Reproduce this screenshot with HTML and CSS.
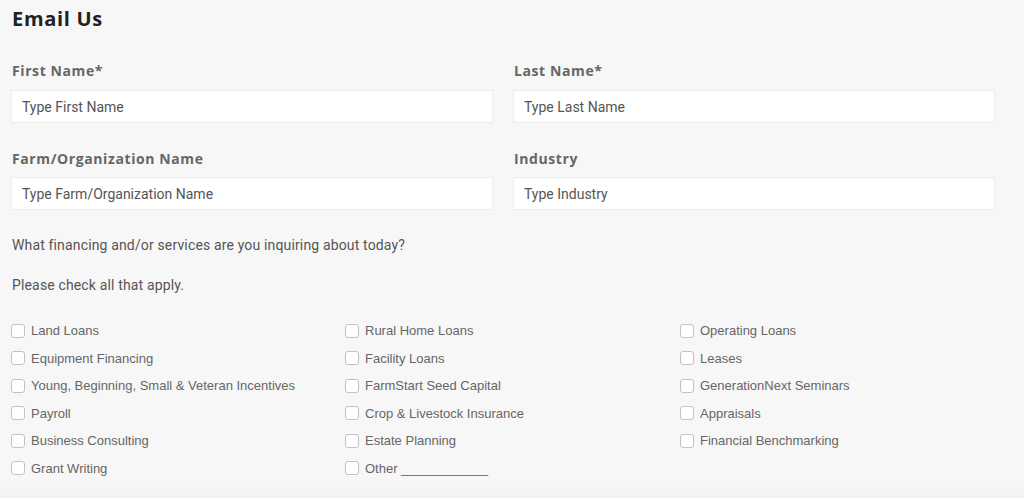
FILE: index.html
```html
<!DOCTYPE html>
<html lang="en">
<head>
    <meta charset="UTF-8">
    <meta name="viewport" content="width=device-width, initial-scale=1.0">
    <title>Email Us</title>
    <link rel="stylesheet" href="styles.css">
</head>
<body>
    <div class="container">
        <h1>Email Us</h1>
        <form id="emailForm">
            <div class="row">
                <div class="field">
                    <label for="firstName">First Name*</label>
                    <input type="text" id="firstName" placeholder="Type First Name">
                </div>
                <div class="field">
                    <label for="lastName">Last Name*</label>
                    <input type="text" id="lastName" placeholder="Type Last Name">
                </div>
            </div>
            <div class="row">
                <div class="field">
                    <label for="farmName">Farm/Organization Name</label>
                    <input type="text" id="farmName" placeholder="Type Farm/Organization Name">
                </div>
                <div class="field">
                    <label for="industry">Industry</label>
                    <input type="text" id="industry" placeholder="Type Industry">
                </div>
            </div>

            <p class="question">What financing and/or services are you inquiring about today?</p>
            <p class="question note">Please check all that apply.</p>

            <div class="checks">
                <label class="check"><input type="checkbox"> Land Loans</label>
                <label class="check"><input type="checkbox"> Rural Home Loans</label>
                <label class="check"><input type="checkbox"> Operating Loans</label>
                <label class="check"><input type="checkbox"> Equipment Financing</label>
                <label class="check"><input type="checkbox"> Facility Loans</label>
                <label class="check"><input type="checkbox"> Leases</label>
                <label class="check"><input type="checkbox"> Young, Beginning, Small &amp; Veteran Incentives</label>
                <label class="check"><input type="checkbox"> FarmStart Seed Capital</label>
                <label class="check"><input type="checkbox"> GenerationNext Seminars</label>
                <label class="check"><input type="checkbox"> Payroll</label>
                <label class="check"><input type="checkbox"> Crop &amp; Livestock Insurance</label>
                <label class="check"><input type="checkbox"> Appraisals</label>
                <label class="check"><input type="checkbox"> Business Consulting</label>
                <label class="check"><input type="checkbox"> Estate Planning</label>
                <label class="check"><input type="checkbox"> Financial Benchmarking</label>
                <label class="check"><input type="checkbox"> Grant Writing</label>
                <label class="check"><input type="checkbox"> Other ____________</label>
            </div>
        </form>
    </div>
</body>
</html>
```

FILE: styles.css
```css
body {
    margin: 0;
    padding: 0;
    background-color: #f3f3f3;
    font-family: Roboto, "Liberation Sans", sans-serif;
}
.container {
    background-color: #f7f7f7;
    padding: 7px 11px 12px;
    height: 468px;
}
h1 {
    margin: 0 0 31px 1px;
    font-family: "Open Sans", sans-serif;
    font-size: 20px;
    line-height: 24px;
    font-weight: 700;
    color: #222;
    letter-spacing: 0.7px;
}
.row {
    display: flex;
    gap: 20px;
    width: 984px;
    margin-bottom: 27px;
}
.row + .row {
    margin-bottom: 26px;
}
.field {
    flex: 1;
}
.field label {
    display: block;
    margin: 0 0 10px 1px;
    font-family: "Open Sans", sans-serif;
    font-size: 14px;
    line-height: 18px;
    font-weight: 700;
    color: #666;
    letter-spacing: 0.6px;
}
.row + .row .field label {
    margin-bottom: 9px;
}
.field input {
    box-sizing: border-box;
    width: 100%;
    height: 33px;
    padding: 0 10px;
    border: 1px solid #ececec;
    background: #fff;
    font-family: Roboto, sans-serif;
    font-size: 14px;
    color: #555;
    outline: none;
}
.field input::placeholder {
    color: #555;
}
.question {
    margin: 0 0 22px 1px;
    font-size: 14px;
    line-height: 18px;
    color: #555;
    letter-spacing: 0.15px;
}
.note {
    margin-bottom: 23px;
}
.checks {
    display: grid;
    grid-template-columns: 334px 335px 335px;
    grid-auto-rows: 27.5px;
}
.check {
    display: flex;
    align-items: center;
    gap: 6px;
    font-family: "Liberation Sans", Arial, sans-serif;
    font-size: 13px;
    color: #666;
}
.check input {
    appearance: none;
    margin: 0;
    width: 14px;
    height: 14px;
    border: 1px solid #c2c2c2;
    border-radius: 3px;
    background: #fff;
}
```
